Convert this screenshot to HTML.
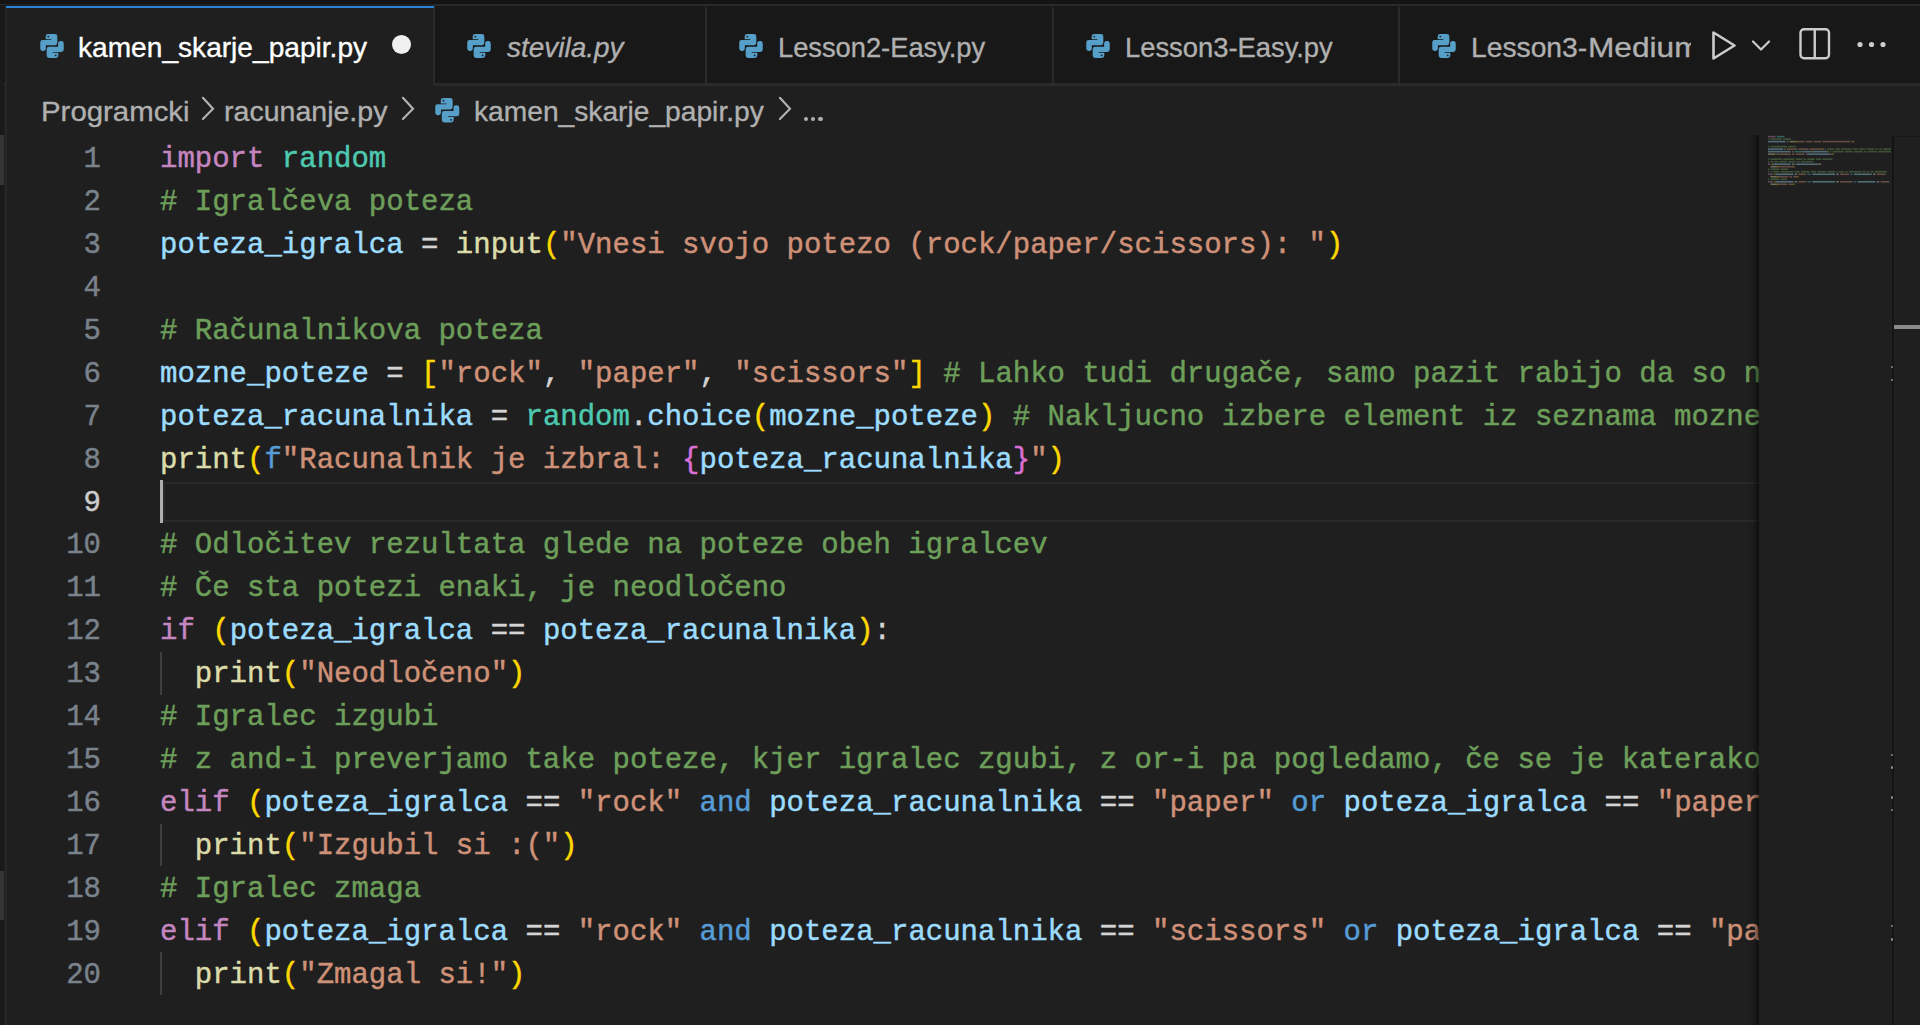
<!DOCTYPE html>
<html><head><meta charset="utf-8"><style>
*{margin:0;padding:0;box-sizing:border-box}
html,body{width:1920px;height:1025px;overflow:hidden;background:#1f1f1f}
body{position:relative;font-family:"Liberation Sans",sans-serif}
.abs{position:absolute}
.ic{position:absolute;overflow:visible}
.tabbar{position:absolute;left:0;top:0;width:1920px;height:85px;background:#181818}
.topstrip{position:absolute;left:0;top:0;width:1920px;height:5px;background:#141414}
.tab{position:absolute;top:5px;height:79px;background:#181818;border-top:1px solid #2b2b2b;border-right:1px solid #2b2b2b;border-bottom:1px solid #2b2b2b}
.tab.active{background:#1f1f1f;border-top:3px solid #0078d4;border-bottom:none;border-right:1px solid #2b2b2b}
.tl{position:absolute;top:0;font-size:28.5px;line-height:1;white-space:nowrap;color:#b0b0b0;transform-origin:0 0;-webkit-text-stroke:0.35px currentColor}
.bc{position:absolute;font-size:28.5px;line-height:1;white-space:nowrap;color:#b0b0b0;transform-origin:0 0;-webkit-text-stroke:0.35px currentColor}
.ln{position:absolute;left:160.0px;height:42.94px;line-height:42.94px;font-family:"Liberation Mono",monospace;font-size:29.0px;white-space:pre;padding-top:2.5px;-webkit-text-stroke:0.45px currentColor}
.num{position:absolute;left:40px;width:61px;text-align:right;height:42.94px;line-height:42.94px;font-family:"Liberation Mono",monospace;font-size:29.0px;color:#7a828c;padding-top:2.5px;-webkit-text-stroke:0.45px currentColor}
.num.act{color:#cccccc}
</style></head>
<body>
<div class="topstrip"></div>
<div class="abs" style="left:0;top:4.4px;width:1920px;height:81.5px;background:#181818;border-top:2.3px solid #2a2a2a;border-bottom:3px solid #2a2a2a"></div><div class="abs" style="left:704.8px;top:6.7px;width:2px;height:76.2px;background:#2a2a2a"></div><div class="abs" style="left:1051.5px;top:6.7px;width:2px;height:76.2px;background:#2a2a2a"></div><div class="abs" style="left:1398px;top:6.7px;width:2px;height:76.2px;background:#2a2a2a"></div><div class="abs" style="left:5px;top:4.4px;width:430px;height:81.6px;background:#1f1f1f;border-right:2px solid #2a2a2a"></div><div class="abs" style="left:0;top:0;width:1920px;height:4.4px;background:#141414"></div><div class="abs" style="left:5.5px;top:5.6px;width:428.2px;height:2.9px;background:#2a84d6"></div>
<svg class="ic" style="left:39.5px;top:34px;width:24px;height:24px" viewBox="0 0 23.4 23.9"><g fill="#569fc8"><path d="M5.4,2.4 A2.4,2.4 0 0 1 7.8,0 L14.6,0 A2.4,2.4 0 0 1 17,2.4 L17,8.8 A2.4,2.4 0 0 1 14.6,11.2 L5.6,11.2 L5.6,14.5 A2.4,2.4 0 0 1 3.2,16.9 L2.4,16.9 A2.4,2.4 0 0 1 0,14.5 L0,8.4 A2.4,2.4 0 0 1 2.4,6 L11,6 L11,5.3 L5.4,5.3 Z"/><path d="M5.4,2.4 A2.4,2.4 0 0 1 7.8,0 L14.6,0 A2.4,2.4 0 0 1 17,2.4 L17,8.8 A2.4,2.4 0 0 1 14.6,11.2 L5.6,11.2 L5.6,14.5 A2.4,2.4 0 0 1 3.2,16.9 L2.4,16.9 A2.4,2.4 0 0 1 0,14.5 L0,8.4 A2.4,2.4 0 0 1 2.4,6 L11,6 L11,5.3 L5.4,5.3 Z" transform="rotate(180 11.7 11.95)"/></g><circle cx="8" cy="2.6" r="0.9" fill="#1f1f1f"/><circle cx="15.4" cy="21.3" r="0.9" fill="#1f1f1f"/></svg><div class="tl" style="left:78.11px;top:33.37px;transform:scaleX(0.9864);color:#ffffff;">kamen_skarje_papir.py</div><div class="abs" style="left:392px;top:34.5px;width:19px;height:19px;border-radius:50%;background:#f0f0f0"></div><svg class="ic" style="left:467px;top:34px;width:24px;height:24px" viewBox="0 0 23.4 23.9"><g fill="#569fc8"><path d="M5.4,2.4 A2.4,2.4 0 0 1 7.8,0 L14.6,0 A2.4,2.4 0 0 1 17,2.4 L17,8.8 A2.4,2.4 0 0 1 14.6,11.2 L5.6,11.2 L5.6,14.5 A2.4,2.4 0 0 1 3.2,16.9 L2.4,16.9 A2.4,2.4 0 0 1 0,14.5 L0,8.4 A2.4,2.4 0 0 1 2.4,6 L11,6 L11,5.3 L5.4,5.3 Z"/><path d="M5.4,2.4 A2.4,2.4 0 0 1 7.8,0 L14.6,0 A2.4,2.4 0 0 1 17,2.4 L17,8.8 A2.4,2.4 0 0 1 14.6,11.2 L5.6,11.2 L5.6,14.5 A2.4,2.4 0 0 1 3.2,16.9 L2.4,16.9 A2.4,2.4 0 0 1 0,14.5 L0,8.4 A2.4,2.4 0 0 1 2.4,6 L11,6 L11,5.3 L5.4,5.3 Z" transform="rotate(180 11.7 11.95)"/></g><circle cx="8" cy="2.6" r="0.9" fill="#1f1f1f"/><circle cx="15.4" cy="21.3" r="0.9" fill="#1f1f1f"/></svg><div class="tl" style="left:506.93px;top:33.37px;transform:scaleX(0.9803);font-style:italic;">stevila.py</div><svg class="ic" style="left:739px;top:34px;width:24px;height:24px" viewBox="0 0 23.4 23.9"><g fill="#569fc8"><path d="M5.4,2.4 A2.4,2.4 0 0 1 7.8,0 L14.6,0 A2.4,2.4 0 0 1 17,2.4 L17,8.8 A2.4,2.4 0 0 1 14.6,11.2 L5.6,11.2 L5.6,14.5 A2.4,2.4 0 0 1 3.2,16.9 L2.4,16.9 A2.4,2.4 0 0 1 0,14.5 L0,8.4 A2.4,2.4 0 0 1 2.4,6 L11,6 L11,5.3 L5.4,5.3 Z"/><path d="M5.4,2.4 A2.4,2.4 0 0 1 7.8,0 L14.6,0 A2.4,2.4 0 0 1 17,2.4 L17,8.8 A2.4,2.4 0 0 1 14.6,11.2 L5.6,11.2 L5.6,14.5 A2.4,2.4 0 0 1 3.2,16.9 L2.4,16.9 A2.4,2.4 0 0 1 0,14.5 L0,8.4 A2.4,2.4 0 0 1 2.4,6 L11,6 L11,5.3 L5.4,5.3 Z" transform="rotate(180 11.7 11.95)"/></g><circle cx="8" cy="2.6" r="0.9" fill="#1f1f1f"/><circle cx="15.4" cy="21.3" r="0.9" fill="#1f1f1f"/></svg><div class="tl" style="left:777.76px;top:33.37px;transform:scaleX(0.9569);">Lesson2-Easy.py</div><svg class="ic" style="left:1085.5px;top:34px;width:24px;height:24px" viewBox="0 0 23.4 23.9"><g fill="#569fc8"><path d="M5.4,2.4 A2.4,2.4 0 0 1 7.8,0 L14.6,0 A2.4,2.4 0 0 1 17,2.4 L17,8.8 A2.4,2.4 0 0 1 14.6,11.2 L5.6,11.2 L5.6,14.5 A2.4,2.4 0 0 1 3.2,16.9 L2.4,16.9 A2.4,2.4 0 0 1 0,14.5 L0,8.4 A2.4,2.4 0 0 1 2.4,6 L11,6 L11,5.3 L5.4,5.3 Z"/><path d="M5.4,2.4 A2.4,2.4 0 0 1 7.8,0 L14.6,0 A2.4,2.4 0 0 1 17,2.4 L17,8.8 A2.4,2.4 0 0 1 14.6,11.2 L5.6,11.2 L5.6,14.5 A2.4,2.4 0 0 1 3.2,16.9 L2.4,16.9 A2.4,2.4 0 0 1 0,14.5 L0,8.4 A2.4,2.4 0 0 1 2.4,6 L11,6 L11,5.3 L5.4,5.3 Z" transform="rotate(180 11.7 11.95)"/></g><circle cx="8" cy="2.6" r="0.9" fill="#1f1f1f"/><circle cx="15.4" cy="21.3" r="0.9" fill="#1f1f1f"/></svg><div class="tl" style="left:1125.26px;top:33.37px;transform:scaleX(0.9596);">Lesson3-Easy.py</div><div class="abs" style="left:0;top:0;width:1691px;height:84px;overflow:hidden"><svg class="ic" style="left:1432px;top:34px;width:24px;height:24px" viewBox="0 0 23.4 23.9"><g fill="#569fc8"><path d="M5.4,2.4 A2.4,2.4 0 0 1 7.8,0 L14.6,0 A2.4,2.4 0 0 1 17,2.4 L17,8.8 A2.4,2.4 0 0 1 14.6,11.2 L5.6,11.2 L5.6,14.5 A2.4,2.4 0 0 1 3.2,16.9 L2.4,16.9 A2.4,2.4 0 0 1 0,14.5 L0,8.4 A2.4,2.4 0 0 1 2.4,6 L11,6 L11,5.3 L5.4,5.3 Z"/><path d="M5.4,2.4 A2.4,2.4 0 0 1 7.8,0 L14.6,0 A2.4,2.4 0 0 1 17,2.4 L17,8.8 A2.4,2.4 0 0 1 14.6,11.2 L5.6,11.2 L5.6,14.5 A2.4,2.4 0 0 1 3.2,16.9 L2.4,16.9 A2.4,2.4 0 0 1 0,14.5 L0,8.4 A2.4,2.4 0 0 1 2.4,6 L11,6 L11,5.3 L5.4,5.3 Z" transform="rotate(180 11.7 11.95)"/></g><circle cx="8" cy="2.6" r="0.9" fill="#1f1f1f"/><circle cx="15.4" cy="21.3" r="0.9" fill="#1f1f1f"/></svg><div class="tl" style="left:1471.38px;top:33.37px;transform:scaleX(0.9909);">Lesson3-</div><div class="tl" style="left:1587.61px;top:33.37px;transform:scaleX(1.1097);">Medium</div></div>

<svg class="ic" style="left:1700px;top:20px;width:200px;height:50px" viewBox="0 0 200 50">
 <path d="M13.5,12.5 L34.5,25.5 L13.5,38.5 Z" fill="none" stroke="#cccccc" stroke-width="2.6" stroke-linejoin="round"/>
 <path d="M53,21.5 L61,29.5 L69,21.5" fill="none" stroke="#cccccc" stroke-width="2.2" stroke-linecap="round" stroke-linejoin="round"/>
 <rect x="100.5" y="9.2" width="28.5" height="29" rx="3.5" fill="none" stroke="#cccccc" stroke-width="2.4"/>
 <line x1="114.75" y1="9.2" x2="114.75" y2="38.2" stroke="#cccccc" stroke-width="2.4"/>
 <circle cx="160" cy="24.5" r="2.6" fill="#cccccc"/><circle cx="171.5" cy="24.5" r="2.6" fill="#cccccc"/><circle cx="183" cy="24.5" r="2.6" fill="#cccccc"/>
</svg>

<div class="bc" style="left:40.79px;top:97.37px;transform:scaleX(1.0311);">Programcki</div><svg class="ic" style="left:195px;top:96px;width:26px;height:26px" viewBox="0 0 26 26"><path d="M7.9,1.8 L18,12.75 L7.9,22.9" fill="none" stroke="#b4b4b4" stroke-width="2.1" stroke-linecap="round"/></svg><div class="bc" style="left:224.10px;top:97.37px;transform:scaleX(1.0016);">racunanje.py</div><svg class="ic" style="left:395px;top:96px;width:26px;height:26px" viewBox="0 0 26 26"><path d="M7.9,1.8 L18,12.75 L7.9,22.9" fill="none" stroke="#b4b4b4" stroke-width="2.1" stroke-linecap="round"/></svg><svg class="ic" style="left:434.5px;top:98px;width:24.5px;height:24.5px" viewBox="0 0 23.4 23.9"><g fill="#569fc8"><path d="M5.4,2.4 A2.4,2.4 0 0 1 7.8,0 L14.6,0 A2.4,2.4 0 0 1 17,2.4 L17,8.8 A2.4,2.4 0 0 1 14.6,11.2 L5.6,11.2 L5.6,14.5 A2.4,2.4 0 0 1 3.2,16.9 L2.4,16.9 A2.4,2.4 0 0 1 0,14.5 L0,8.4 A2.4,2.4 0 0 1 2.4,6 L11,6 L11,5.3 L5.4,5.3 Z"/><path d="M5.4,2.4 A2.4,2.4 0 0 1 7.8,0 L14.6,0 A2.4,2.4 0 0 1 17,2.4 L17,8.8 A2.4,2.4 0 0 1 14.6,11.2 L5.6,11.2 L5.6,14.5 A2.4,2.4 0 0 1 3.2,16.9 L2.4,16.9 A2.4,2.4 0 0 1 0,14.5 L0,8.4 A2.4,2.4 0 0 1 2.4,6 L11,6 L11,5.3 L5.4,5.3 Z" transform="rotate(180 11.7 11.95)"/></g><circle cx="8" cy="2.6" r="0.9" fill="#1f1f1f"/><circle cx="15.4" cy="21.3" r="0.9" fill="#1f1f1f"/></svg><div class="bc" style="left:473.90px;top:97.37px;transform:scaleX(0.9888);">kamen_skarje_papir.py</div><svg class="ic" style="left:772px;top:96px;width:26px;height:26px" viewBox="0 0 26 26"><path d="M7.9,1.8 L18,12.75 L7.9,22.9" fill="none" stroke="#b4b4b4" stroke-width="2.1" stroke-linecap="round"/></svg><div class="abs" style="left:804px;top:116.5px;width:4.2px;height:4.2px;border-radius:50%;background:#b0b0b0"></div><div class="abs" style="left:811.2px;top:116.5px;width:4.2px;height:4.2px;border-radius:50%;background:#b0b0b0"></div><div class="abs" style="left:818.4px;top:116.5px;width:4.2px;height:4.2px;border-radius:50%;background:#b0b0b0"></div>

<div class="abs" style="left:0;top:135px;width:1758.5px;height:890px;overflow:hidden">
 <div class="abs" style="left:163px;top:346.50px;width:1600px;height:40.5px;border:2.6px solid #292929"></div>
 <div class="abs" style="left:159.5px;top:345.02px;width:3.5px;height:43px;background:#aeafad"></div>
 <div class="abs" style="left:160px;top:516.78px;width:1.8px;height:42.94px;background:#3e3e3e"></div>
 <div class="abs" style="left:160px;top:688.54px;width:1.8px;height:42.94px;background:#3e3e3e"></div>
 <div class="abs" style="left:160px;top:817.36px;width:1.8px;height:42.94px;background:#3e3e3e"></div>
 <div class="abs" style="left:0;top:-135px;width:1920px;height:1025px">
 <div class="ln" style="top:136.50px"><span style="color:#c586c0">import</span><span style="color:#d4d4d4"> </span><span style="color:#4ec9b0">random</span></div>
<div class="ln" style="top:179.44px"><span style="color:#6d9f5a"># Igralčeva poteza</span></div>
<div class="ln" style="top:222.38px"><span style="color:#9cdcfe">poteza_igralca</span><span style="color:#d4d4d4"> = </span><span style="color:#dcdcaa">input</span><span style="color:#ffd700">(</span><span style="color:#ce9178">"Vnesi svojo potezo (rock/paper/scissors): "</span><span style="color:#ffd700">)</span></div>
<div class="ln" style="top:265.32px"></div>
<div class="ln" style="top:308.26px"><span style="color:#6d9f5a"># Računalnikova poteza</span></div>
<div class="ln" style="top:351.20px"><span style="color:#9cdcfe">mozne_poteze</span><span style="color:#d4d4d4"> = </span><span style="color:#ffd700">[</span><span style="color:#ce9178">"rock"</span><span style="color:#d4d4d4">, </span><span style="color:#ce9178">"paper"</span><span style="color:#d4d4d4">, </span><span style="color:#ce9178">"scissors"</span><span style="color:#ffd700">]</span><span style="color:#d4d4d4"> </span><span style="color:#6d9f5a"># Lahko tudi drugače, samo pazit rabijo da so napisani enako</span></div>
<div class="ln" style="top:394.14px"><span style="color:#9cdcfe">poteza_racunalnika</span><span style="color:#d4d4d4"> = </span><span style="color:#4ec9b0">random</span><span style="color:#d4d4d4">.</span><span style="color:#9cdcfe">choice</span><span style="color:#ffd700">(</span><span style="color:#9cdcfe">mozne_poteze</span><span style="color:#ffd700">)</span><span style="color:#d4d4d4"> </span><span style="color:#6d9f5a"># Nakljucno izbere element iz seznama mozne_poteze</span></div>
<div class="ln" style="top:437.08px"><span style="color:#dcdcaa">print</span><span style="color:#ffd700">(</span><span style="color:#569cd6">f</span><span style="color:#ce9178">"Racunalnik je izbral: </span><span style="color:#da70d6">{</span><span style="color:#9cdcfe">poteza_racunalnika</span><span style="color:#da70d6">}</span><span style="color:#ce9178">"</span><span style="color:#ffd700">)</span></div>
<div class="ln" style="top:480.02px"></div>
<div class="ln" style="top:522.96px"><span style="color:#6d9f5a"># Odločitev rezultata glede na poteze obeh igralcev</span></div>
<div class="ln" style="top:565.90px"><span style="color:#6d9f5a"># Če sta potezi enaki, je neodločeno</span></div>
<div class="ln" style="top:608.84px"><span style="color:#c586c0">if</span><span style="color:#d4d4d4"> </span><span style="color:#ffd700">(</span><span style="color:#9cdcfe">poteza_igralca</span><span style="color:#d4d4d4"> == </span><span style="color:#9cdcfe">poteza_racunalnika</span><span style="color:#ffd700">)</span><span style="color:#d4d4d4">:</span></div>
<div class="ln" style="top:651.78px"><span style="color:#d4d4d4">  </span><span style="color:#dcdcaa">print</span><span style="color:#ffd700">(</span><span style="color:#ce9178">"Neodločeno"</span><span style="color:#ffd700">)</span></div>
<div class="ln" style="top:694.72px"><span style="color:#6d9f5a"># Igralec izgubi</span></div>
<div class="ln" style="top:737.66px"><span style="color:#6d9f5a"># z and-i preverjamo take poteze, kjer igralec zgubi, z or-i pa pogledamo, če se je katerakoli</span></div>
<div class="ln" style="top:780.60px"><span style="color:#c586c0">elif</span><span style="color:#d4d4d4"> </span><span style="color:#ffd700">(</span><span style="color:#9cdcfe">poteza_igralca</span><span style="color:#d4d4d4"> == </span><span style="color:#ce9178">"rock"</span><span style="color:#d4d4d4"> </span><span style="color:#569cd6">and</span><span style="color:#d4d4d4"> </span><span style="color:#9cdcfe">poteza_racunalnika</span><span style="color:#d4d4d4"> == </span><span style="color:#ce9178">"paper"</span><span style="color:#d4d4d4"> </span><span style="color:#569cd6">or</span><span style="color:#d4d4d4"> </span><span style="color:#9cdcfe">poteza_igralca</span><span style="color:#d4d4d4"> == </span><span style="color:#ce9178">"paper"</span><span style="color:#d4d4d4"> </span></div>
<div class="ln" style="top:823.54px"><span style="color:#d4d4d4">  </span><span style="color:#dcdcaa">print</span><span style="color:#ffd700">(</span><span style="color:#ce9178">"Izgubil si :("</span><span style="color:#ffd700">)</span></div>
<div class="ln" style="top:866.48px"><span style="color:#6d9f5a"># Igralec zmaga</span></div>
<div class="ln" style="top:909.42px"><span style="color:#c586c0">elif</span><span style="color:#d4d4d4"> </span><span style="color:#ffd700">(</span><span style="color:#9cdcfe">poteza_igralca</span><span style="color:#d4d4d4"> == </span><span style="color:#ce9178">"rock"</span><span style="color:#d4d4d4"> </span><span style="color:#569cd6">and</span><span style="color:#d4d4d4"> </span><span style="color:#9cdcfe">poteza_racunalnika</span><span style="color:#d4d4d4"> == </span><span style="color:#ce9178">"scissors"</span><span style="color:#d4d4d4"> </span><span style="color:#569cd6">or</span><span style="color:#d4d4d4"> </span><span style="color:#9cdcfe">poteza_igralca</span><span style="color:#d4d4d4"> == </span><span style="color:#ce9178">"paper"</span></div>
<div class="ln" style="top:952.36px"><span style="color:#d4d4d4">  </span><span style="color:#dcdcaa">print</span><span style="color:#ffd700">(</span><span style="color:#ce9178">"Zmagal si!"</span><span style="color:#ffd700">)</span></div>
 </div>
</div>
<div class="num" style="top:136.50px">1</div>
<div class="num" style="top:179.44px">2</div>
<div class="num" style="top:222.38px">3</div>
<div class="num" style="top:265.32px">4</div>
<div class="num" style="top:308.26px">5</div>
<div class="num" style="top:351.20px">6</div>
<div class="num" style="top:394.14px">7</div>
<div class="num" style="top:437.08px">8</div>
<div class="num act" style="top:480.02px">9</div>
<div class="num" style="top:522.96px">10</div>
<div class="num" style="top:565.90px">11</div>
<div class="num" style="top:608.84px">12</div>
<div class="num" style="top:651.78px">13</div>
<div class="num" style="top:694.72px">14</div>
<div class="num" style="top:737.66px">15</div>
<div class="num" style="top:780.60px">16</div>
<div class="num" style="top:823.54px">17</div>
<div class="num" style="top:866.48px">18</div>
<div class="num" style="top:909.42px">19</div>
<div class="num" style="top:952.36px">20</div>


<div class="abs" style="left:1745px;top:135px;width:14px;height:890px;background:linear-gradient(to right, rgba(0,0,0,0), rgba(0,0,0,0.12) 60%, rgba(0,0,0,0.45) 90%, rgba(0,0,0,0.5))"></div>
<svg style="position:absolute;left:0;top:0;width:1920px;height:1025px" viewBox="0 0 1920 1025"><g opacity="0.4"><rect x="1768.00" y="135.80" width="7.59" height="1.6" fill="#c586c0"/><rect x="1776.86" y="135.80" width="7.59" height="1.6" fill="#4ec9b0"/><rect x="1768.00" y="138.31" width="1.26" height="1.6" fill="#6d9f5a"/><rect x="1770.53" y="138.31" width="11.38" height="1.6" fill="#6d9f5a"/><rect x="1783.18" y="138.31" width="7.59" height="1.6" fill="#6d9f5a"/><rect x="1768.00" y="140.82" width="17.71" height="1.6" fill="#9cdcfe"/><rect x="1786.97" y="140.82" width="1.26" height="1.6" fill="#d4d4d4"/><rect x="1789.51" y="140.82" width="6.32" height="1.6" fill="#dcdcaa"/><rect x="1795.83" y="140.82" width="1.26" height="1.6" fill="#ffd700"/><rect x="1797.10" y="140.82" width="7.59" height="1.6" fill="#ce9178"/><rect x="1805.95" y="140.82" width="6.32" height="1.6" fill="#ce9178"/><rect x="1813.54" y="140.82" width="7.59" height="1.6" fill="#ce9178"/><rect x="1822.39" y="140.82" width="27.83" height="1.6" fill="#ce9178"/><rect x="1851.49" y="140.82" width="1.26" height="1.6" fill="#ce9178"/><rect x="1852.76" y="140.82" width="1.26" height="1.6" fill="#ffd700"/><rect x="1768.00" y="145.84" width="1.26" height="1.6" fill="#6d9f5a"/><rect x="1770.53" y="145.84" width="16.45" height="1.6" fill="#6d9f5a"/><rect x="1788.24" y="145.84" width="7.59" height="1.6" fill="#6d9f5a"/><rect x="1768.00" y="148.35" width="15.18" height="1.6" fill="#9cdcfe"/><rect x="1784.44" y="148.35" width="1.26" height="1.6" fill="#d4d4d4"/><rect x="1786.97" y="148.35" width="1.26" height="1.6" fill="#ffd700"/><rect x="1788.24" y="148.35" width="7.59" height="1.6" fill="#ce9178"/><rect x="1795.83" y="148.35" width="1.26" height="1.6" fill="#d4d4d4"/><rect x="1798.36" y="148.35" width="8.85" height="1.6" fill="#ce9178"/><rect x="1807.21" y="148.35" width="1.26" height="1.6" fill="#d4d4d4"/><rect x="1809.74" y="148.35" width="12.65" height="1.6" fill="#ce9178"/><rect x="1822.39" y="148.35" width="1.26" height="1.6" fill="#ffd700"/><rect x="1824.92" y="148.35" width="1.26" height="1.6" fill="#6d9f5a"/><rect x="1827.45" y="148.35" width="6.32" height="1.6" fill="#6d9f5a"/><rect x="1835.05" y="148.35" width="5.06" height="1.6" fill="#6d9f5a"/><rect x="1841.37" y="148.35" width="10.12" height="1.6" fill="#6d9f5a"/><rect x="1852.76" y="148.35" width="5.06" height="1.6" fill="#6d9f5a"/><rect x="1859.08" y="148.35" width="6.32" height="1.6" fill="#6d9f5a"/><rect x="1866.67" y="148.35" width="7.59" height="1.6" fill="#6d9f5a"/><rect x="1875.53" y="148.35" width="2.53" height="1.6" fill="#6d9f5a"/><rect x="1879.32" y="148.35" width="2.53" height="1.6" fill="#6d9f5a"/><rect x="1883.12" y="148.35" width="7.88" height="1.6" fill="#6d9f5a"/><rect x="1768.00" y="150.86" width="22.77" height="1.6" fill="#9cdcfe"/><rect x="1792.04" y="150.86" width="1.26" height="1.6" fill="#d4d4d4"/><rect x="1794.57" y="150.86" width="7.59" height="1.6" fill="#4ec9b0"/><rect x="1802.15" y="150.86" width="1.26" height="1.6" fill="#d4d4d4"/><rect x="1803.42" y="150.86" width="7.59" height="1.6" fill="#9cdcfe"/><rect x="1811.01" y="150.86" width="1.26" height="1.6" fill="#ffd700"/><rect x="1812.28" y="150.86" width="15.18" height="1.6" fill="#9cdcfe"/><rect x="1827.45" y="150.86" width="1.26" height="1.6" fill="#ffd700"/><rect x="1829.98" y="150.86" width="1.26" height="1.6" fill="#6d9f5a"/><rect x="1832.52" y="150.86" width="11.38" height="1.6" fill="#6d9f5a"/><rect x="1845.16" y="150.86" width="7.59" height="1.6" fill="#6d9f5a"/><rect x="1854.02" y="150.86" width="8.85" height="1.6" fill="#6d9f5a"/><rect x="1864.14" y="150.86" width="2.53" height="1.6" fill="#6d9f5a"/><rect x="1867.93" y="150.86" width="8.85" height="1.6" fill="#6d9f5a"/><rect x="1878.06" y="150.86" width="12.94" height="1.6" fill="#6d9f5a"/><rect x="1768.00" y="153.37" width="6.32" height="1.6" fill="#dcdcaa"/><rect x="1774.33" y="153.37" width="1.26" height="1.6" fill="#ffd700"/><rect x="1775.59" y="153.37" width="1.26" height="1.6" fill="#569cd6"/><rect x="1776.86" y="153.37" width="13.91" height="1.6" fill="#ce9178"/><rect x="1792.04" y="153.37" width="2.53" height="1.6" fill="#ce9178"/><rect x="1795.83" y="153.37" width="8.85" height="1.6" fill="#ce9178"/><rect x="1805.95" y="153.37" width="1.26" height="1.6" fill="#da70d6"/><rect x="1807.21" y="153.37" width="22.77" height="1.6" fill="#9cdcfe"/><rect x="1829.98" y="153.37" width="1.26" height="1.6" fill="#da70d6"/><rect x="1831.25" y="153.37" width="1.26" height="1.6" fill="#ce9178"/><rect x="1832.52" y="153.37" width="1.26" height="1.6" fill="#ffd700"/><rect x="1768.00" y="158.39" width="1.26" height="1.6" fill="#6d9f5a"/><rect x="1770.53" y="158.39" width="11.38" height="1.6" fill="#6d9f5a"/><rect x="1783.18" y="158.39" width="11.38" height="1.6" fill="#6d9f5a"/><rect x="1795.83" y="158.39" width="6.32" height="1.6" fill="#6d9f5a"/><rect x="1803.42" y="158.39" width="2.53" height="1.6" fill="#6d9f5a"/><rect x="1807.21" y="158.39" width="7.59" height="1.6" fill="#6d9f5a"/><rect x="1816.07" y="158.39" width="5.06" height="1.6" fill="#6d9f5a"/><rect x="1822.39" y="158.39" width="10.12" height="1.6" fill="#6d9f5a"/><rect x="1768.00" y="160.90" width="1.26" height="1.6" fill="#6d9f5a"/><rect x="1770.53" y="160.90" width="2.53" height="1.6" fill="#6d9f5a"/><rect x="1774.33" y="160.90" width="3.79" height="1.6" fill="#6d9f5a"/><rect x="1779.38" y="160.90" width="7.59" height="1.6" fill="#6d9f5a"/><rect x="1788.24" y="160.90" width="7.59" height="1.6" fill="#6d9f5a"/><rect x="1797.10" y="160.90" width="2.53" height="1.6" fill="#6d9f5a"/><rect x="1800.89" y="160.90" width="12.65" height="1.6" fill="#6d9f5a"/><rect x="1768.00" y="163.41" width="2.53" height="1.6" fill="#c586c0"/><rect x="1771.80" y="163.41" width="1.26" height="1.6" fill="#ffd700"/><rect x="1773.06" y="163.41" width="17.71" height="1.6" fill="#9cdcfe"/><rect x="1792.04" y="163.41" width="2.53" height="1.6" fill="#d4d4d4"/><rect x="1795.83" y="163.41" width="22.77" height="1.6" fill="#9cdcfe"/><rect x="1818.60" y="163.41" width="1.26" height="1.6" fill="#ffd700"/><rect x="1819.87" y="163.41" width="1.26" height="1.6" fill="#d4d4d4"/><rect x="1770.53" y="165.92" width="6.32" height="1.6" fill="#dcdcaa"/><rect x="1776.86" y="165.92" width="1.26" height="1.6" fill="#ffd700"/><rect x="1778.12" y="165.92" width="15.18" height="1.6" fill="#ce9178"/><rect x="1793.30" y="165.92" width="1.26" height="1.6" fill="#ffd700"/><rect x="1768.00" y="168.43" width="1.26" height="1.6" fill="#6d9f5a"/><rect x="1770.53" y="168.43" width="8.85" height="1.6" fill="#6d9f5a"/><rect x="1780.65" y="168.43" width="7.59" height="1.6" fill="#6d9f5a"/><rect x="1768.00" y="170.94" width="1.26" height="1.6" fill="#6d9f5a"/><rect x="1770.53" y="170.94" width="1.26" height="1.6" fill="#6d9f5a"/><rect x="1773.06" y="170.94" width="6.32" height="1.6" fill="#6d9f5a"/><rect x="1780.65" y="170.94" width="12.65" height="1.6" fill="#6d9f5a"/><rect x="1794.57" y="170.94" width="5.06" height="1.6" fill="#6d9f5a"/><rect x="1800.89" y="170.94" width="8.85" height="1.6" fill="#6d9f5a"/><rect x="1811.01" y="170.94" width="5.06" height="1.6" fill="#6d9f5a"/><rect x="1817.34" y="170.94" width="8.85" height="1.6" fill="#6d9f5a"/><rect x="1827.45" y="170.94" width="7.59" height="1.6" fill="#6d9f5a"/><rect x="1836.31" y="170.94" width="1.26" height="1.6" fill="#6d9f5a"/><rect x="1838.84" y="170.94" width="5.06" height="1.6" fill="#6d9f5a"/><rect x="1845.16" y="170.94" width="2.53" height="1.6" fill="#6d9f5a"/><rect x="1848.96" y="170.94" width="12.65" height="1.6" fill="#6d9f5a"/><rect x="1862.88" y="170.94" width="2.53" height="1.6" fill="#6d9f5a"/><rect x="1866.67" y="170.94" width="2.53" height="1.6" fill="#6d9f5a"/><rect x="1870.46" y="170.94" width="2.53" height="1.6" fill="#6d9f5a"/><rect x="1874.26" y="170.94" width="12.65" height="1.6" fill="#6d9f5a"/><rect x="1768.00" y="173.45" width="5.06" height="1.6" fill="#c586c0"/><rect x="1774.33" y="173.45" width="1.26" height="1.6" fill="#ffd700"/><rect x="1775.59" y="173.45" width="17.71" height="1.6" fill="#9cdcfe"/><rect x="1794.57" y="173.45" width="2.53" height="1.6" fill="#d4d4d4"/><rect x="1798.36" y="173.45" width="7.59" height="1.6" fill="#ce9178"/><rect x="1807.21" y="173.45" width="3.79" height="1.6" fill="#569cd6"/><rect x="1812.28" y="173.45" width="22.77" height="1.6" fill="#9cdcfe"/><rect x="1836.31" y="173.45" width="2.53" height="1.6" fill="#d4d4d4"/><rect x="1840.11" y="173.45" width="8.85" height="1.6" fill="#ce9178"/><rect x="1850.22" y="173.45" width="2.53" height="1.6" fill="#569cd6"/><rect x="1854.02" y="173.45" width="17.71" height="1.6" fill="#9cdcfe"/><rect x="1872.99" y="173.45" width="2.53" height="1.6" fill="#d4d4d4"/><rect x="1876.79" y="173.45" width="8.85" height="1.6" fill="#ce9178"/><rect x="1770.53" y="175.96" width="6.32" height="1.6" fill="#dcdcaa"/><rect x="1776.86" y="175.96" width="1.26" height="1.6" fill="#ffd700"/><rect x="1778.12" y="175.96" width="10.12" height="1.6" fill="#ce9178"/><rect x="1789.51" y="175.96" width="2.53" height="1.6" fill="#ce9178"/><rect x="1793.30" y="175.96" width="3.79" height="1.6" fill="#ce9178"/><rect x="1797.10" y="175.96" width="1.26" height="1.6" fill="#ffd700"/><rect x="1768.00" y="178.47" width="1.26" height="1.6" fill="#6d9f5a"/><rect x="1770.53" y="178.47" width="8.85" height="1.6" fill="#6d9f5a"/><rect x="1780.65" y="178.47" width="6.32" height="1.6" fill="#6d9f5a"/><rect x="1768.00" y="180.98" width="5.06" height="1.6" fill="#c586c0"/><rect x="1774.33" y="180.98" width="1.26" height="1.6" fill="#ffd700"/><rect x="1775.59" y="180.98" width="17.71" height="1.6" fill="#9cdcfe"/><rect x="1794.57" y="180.98" width="2.53" height="1.6" fill="#d4d4d4"/><rect x="1798.36" y="180.98" width="7.59" height="1.6" fill="#ce9178"/><rect x="1807.21" y="180.98" width="3.79" height="1.6" fill="#569cd6"/><rect x="1812.28" y="180.98" width="22.77" height="1.6" fill="#9cdcfe"/><rect x="1836.31" y="180.98" width="2.53" height="1.6" fill="#d4d4d4"/><rect x="1840.11" y="180.98" width="12.65" height="1.6" fill="#ce9178"/><rect x="1854.02" y="180.98" width="2.53" height="1.6" fill="#569cd6"/><rect x="1857.82" y="180.98" width="17.71" height="1.6" fill="#9cdcfe"/><rect x="1876.79" y="180.98" width="2.53" height="1.6" fill="#d4d4d4"/><rect x="1880.59" y="180.98" width="8.85" height="1.6" fill="#ce9178"/><rect x="1770.53" y="183.49" width="6.32" height="1.6" fill="#dcdcaa"/><rect x="1776.86" y="183.49" width="1.26" height="1.6" fill="#ffd700"/><rect x="1778.12" y="183.49" width="8.85" height="1.6" fill="#ce9178"/><rect x="1788.24" y="183.49" width="5.06" height="1.6" fill="#ce9178"/><rect x="1793.30" y="183.49" width="1.26" height="1.6" fill="#ffd700"/></g></svg>
<div class="abs" style="left:1892px;top:135.5px;width:2px;height:890px;background:#141414"></div>
<div class="abs" style="left:1892px;top:135.5px;width:28px;height:1.6px;background:#171717"></div>
<div class="abs" style="left:1894px;top:325px;width:26px;height:4px;background:#8a8a8a"></div>
<div class="abs" style="left:1890.5px;top:365.8px;width:2.6px;height:2.6px;border-radius:50%;background:#8c8c8c"></div><div class="abs" style="left:1890.5px;top:378.8px;width:2.6px;height:2.6px;border-radius:50%;background:#8c8c8c"></div><div class="abs" style="left:1890.5px;top:753.8px;width:2.6px;height:2.6px;border-radius:50%;background:#8c8c8c"></div><div class="abs" style="left:1890.5px;top:766.3px;width:2.6px;height:2.6px;border-radius:50%;background:#8c8c8c"></div><div class="abs" style="left:1890.5px;top:796.3px;width:2.6px;height:2.6px;border-radius:50%;background:#8c8c8c"></div><div class="abs" style="left:1890.5px;top:808.8px;width:2.6px;height:2.6px;border-radius:50%;background:#8c8c8c"></div><div class="abs" style="left:1890.5px;top:924.8px;width:2.6px;height:2.6px;border-radius:50%;background:#8c8c8c"></div><div class="abs" style="left:1890.5px;top:938.4px;width:2.6px;height:2.6px;border-radius:50%;background:#8c8c8c"></div>
<div class="abs" style="left:0;top:5px;width:4px;height:1020px;background:#1a1a1a"></div>
<div class="abs" style="left:4.5px;top:8px;width:2px;height:1017px;background:#272727"></div>
<div class="abs" style="left:0;top:135px;width:3.5px;height:50px;background:#363636"></div>
<div class="abs" style="left:0;top:870.5px;width:3.5px;height:49.5px;background:#363636"></div>

</body></html>
